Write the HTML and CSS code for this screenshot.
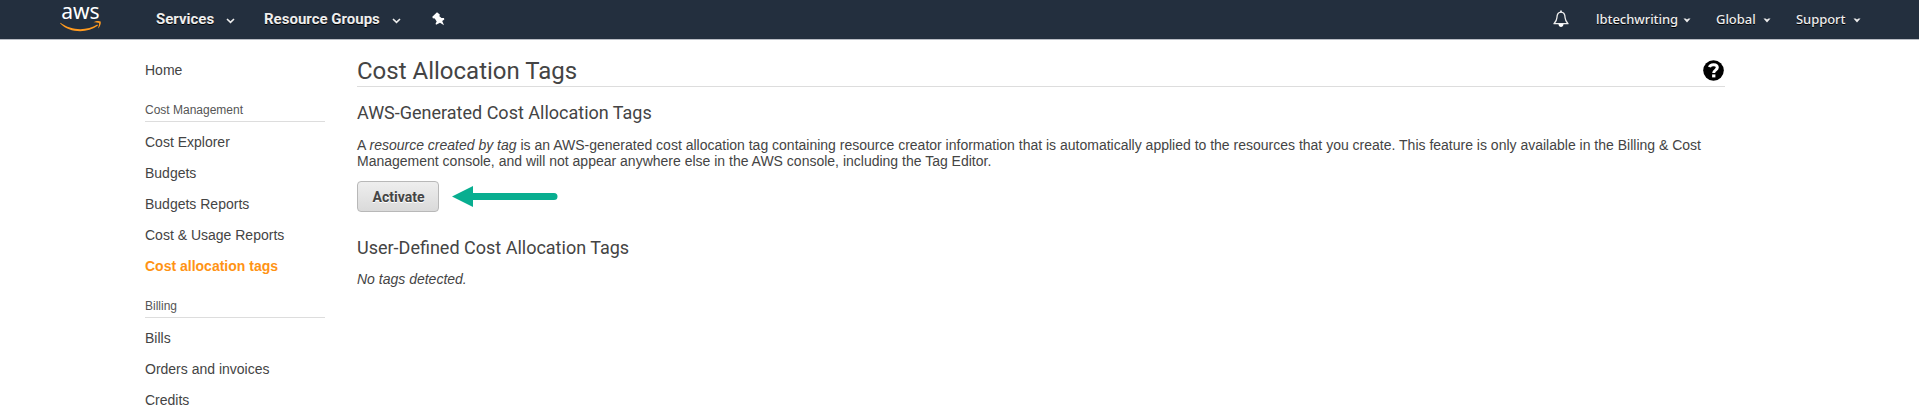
FILE: index.html
```html
<!DOCTYPE html>
<html lang="en">
<head>
<meta charset="utf-8">
<title>Cost Allocation Tags</title>
<link rel="stylesheet" href="styles.css">
</head>
<body>
<header class="topbar">
  <svg class="logo" width="42" height="30" viewBox="0 -3 42 30">
    <text class="logo-text" x="1.2" y="14.300" textLength="38.5" lengthAdjust="spacingAndGlyphs">aws</text>
    <path d="M0.5 17.8 C11 25.8 27 26 37.3 19.6 L38 20.6 C27 28.6 9.500 28 0.200 18.400 Z" fill="#ff9a1f"/>
    <path d="M33.500 17.300 C36 15.700 39 15.600 40.700 16.500 C41.200 18.600 40.100 21.600 38 23.500 C38.700 21.300 39.500 19.200 39 18.100 C38 17.300 35.800 17.600 33.500 17.300 Z" fill="#ff9a1f"/>
  </svg>
  <nav class="menu">
    <a class="services">Services<svg class="chevron" width="9" height="6" viewBox="0 0 9 6"><path d="M1 1l3.500 3.300L8 1" fill="none" stroke="#eee" stroke-width="1.600"/></svg></a>
    <a class="groups">Resource Groups<svg class="chevron" width="9" height="6" viewBox="0 0 9 6"><path d="M1 1l3.500 3.300L8 1" fill="none" stroke="#eee" stroke-width="1.600"/></svg></a>
    <svg class="pin" width="13" height="14" viewBox="0 0 13 14"><path d="M5 0.300 L7.800 2.500 L7.400 4.300 L9.500 6 L12 6 L12.300 7.400 L10.200 9 L12 13.300 L8 10.700 L4 12.800 L3.600 11.500 L4.700 9.500 L2.800 6.500 L0.800 6.200 L0.300 4.800 Z" fill="#fff"/></svg>
  </nav>
  <nav class="account">
    <svg class="bell" width="16" height="18" viewBox="0 0 16 18"><path d="M8 2.200 C4.800 2.200 4 5 3.900 7.700 C3.800 10.500 2.800 11.700 1 13.700 H15 C13.200 11.700 12.200 10.500 12.100 7.700 C12 5 11.200 2.200 8 2.200 Z" fill="none" stroke="#eee" stroke-width="1.300" stroke-linejoin="round"/><path d="M7.200 0.500h1.600v2H7.200zM5.500 14h5c0 4-5 4-5 0z" fill="#fff"/></svg>
    <a class="user">lbtechwriting</a><svg class="caret" width="8" height="5" viewBox="0 0 8 5"><path d="M0.500 0.500h2L4 1.500 5.500 0.500h2L4 4.500z" fill="#eee"/></svg>
    <a class="region">Global</a><svg class="caret" width="8" height="5" viewBox="0 0 8 5"><path d="M0.500 0.500h2L4 1.500 5.500 0.500h2L4 4.500z" fill="#eee"/></svg>
    <a class="support">Support</a><svg class="caret" width="8" height="5" viewBox="0 0 8 5"><path d="M0.500 0.500h2L4 1.500 5.500 0.500h2L4 4.500z" fill="#eee"/></svg>
  </nav>
</header>
<div class="page">
  <aside class="sidebar">
    <a>Home</a>
    <h3>Cost Management</h3>
    <div class="links">
      <a>Cost Explorer</a>
      <a>Budgets</a>
      <a>Budgets Reports</a>
      <a>Cost &amp; Usage Reports</a>
      <a class="active">Cost allocation tags</a>
    </div>
    <h3>Billing</h3>
    <div class="links">
      <a>Bills</a>
      <a>Orders and invoices</a>
      <a>Credits</a>
    </div>
  </aside>
  <main class="content">
    <div class="title">
      <h1>Cost Allocation Tags</h1>
      <svg class="help" width="21" height="21" viewBox="0 0 21 21"><circle cx="10.500" cy="10.500" r="10.300" fill="#000"/><path d="M6.500 7.200 C7.400 3.900 14.300 3.800 14.300 7.600 C14.300 10.300 10.700 10 10.700 13" fill="none" stroke="#fff" stroke-width="3"/><path d="M9.100 14.400h3.300v3H9.100z" fill="#fff"/></svg>
    </div>
    <h2>AWS-Generated Cost Allocation Tags</h2>
    <p class="intro">A <em>resource created by tag</em> is an AWS-generated cost allocation tag containing resource creator information that is automatically applied to the resources that you create. This feature is only available in the Billing &amp; Cost Management console, and will not appear anywhere else in the AWS console, including the Tag Editor.</p>
    <div class="actions">
      <button class="activate">Activate</button>
      <svg width="106" height="22" viewBox="0 0 106 22"><path d="M0 10.500L21 0v7h81a3.500 3.500 0 0 1 0 7H21v7z" fill="#08ae90"/></svg>
    </div>
    <h2 class="user-tags">User-Defined Cost Allocation Tags</h2>
    <p class="empty">No tags detected.</p>
  </main>
</div>
</body>
</html>
```

FILE: styles.css
```css
* { box-sizing: border-box; }
body {
  margin: 0;
  background: #fff;
  color: #444;
  font: 14px/16px "Liberation Sans", Arial, sans-serif;
}
h1, h2, h3, p { margin: 0; font-weight: 400; }
.topbar {
  display: flex;
  align-items: center;
  height: 40px;
  padding: 0 58px 0 60px;
  background: #232f3e;
  border-bottom: 1px solid #b9bdc4;
  color: #eee;
  text-shadow: 0 1px 0 #000;
}
.logo { margin-top: -5px; overflow: visible; }
.logo-text { font: 21px "Noto Sans", sans-serif; fill: #fff; text-shadow: none; }
.menu, .account { display: flex; align-items: center; }
.menu { margin: -2px 0 0 54px; font: 700 15px/18px Roboto, sans-serif; }
.menu a { display: flex; align-items: center; }
.services { width: 108px; }
.groups { width: 137px; }
.chevron { margin: 4px 0 0 auto; }
.services .chevron { margin-right: 29px; }
.groups .chevron { margin-right: 0; }
.pin { margin-left: 31px; }
.account { margin: -1px 0 0 auto; font: 500 13px/18px "Noto Sans", sans-serif; letter-spacing: -0.05px; }
.caret { margin-top: 2px; }
.bell { margin-right: 27px; }
.user { width: 87px; }
.region { width: 47px; margin-left: 25px; }
.support { width: 57px; margin-left: 25px; }
.page { display: flex; gap: 32px; padding: 0 194px 0 145px; }
.sidebar { display: flex; flex-direction: column; width: 180px; padding-top: 22px; }
.sidebar h3 {
  margin: 25px 0 12px;
  padding-bottom: 4px;
  border-bottom: 1px solid #ddd;
  color: #555;
  font-size: 12px;
  line-height: 14px;
}
.links { display: flex; flex-direction: column; gap: 15px; }
.active { color: #ff9314; font-weight: 700; }
.content { flex: 1; padding-top: 16px; }
.title {
  display: flex;
  justify-content: space-between;
  height: 31px;
  border-bottom: 1px solid #ddd;
}
h1 { font: 400 24px/30px Roboto, sans-serif; }
.help { margin: 4px 1px 0 0; }
h2 { margin-top: 16px; font: 400 18px/20px Roboto, sans-serif; }
.intro { margin-top: 14px; }
.actions { display: flex; align-items: center; gap: 13px; margin-top: 12px; }
.activate {
  width: 82px;
  height: 31px;
  padding: 0 0 0 1px;
  border: 1px solid #b8b8b8;
  border-radius: 4px;
  background: linear-gradient(#eee, #dadada);
  color: #444;
  font: 700 14px/20px Roboto, sans-serif;
  text-shadow: 0 1px 0 #fff;
}
.user-tags { margin-top: 26px; }
.empty { margin-top: 13px; font-style: italic; }
```
